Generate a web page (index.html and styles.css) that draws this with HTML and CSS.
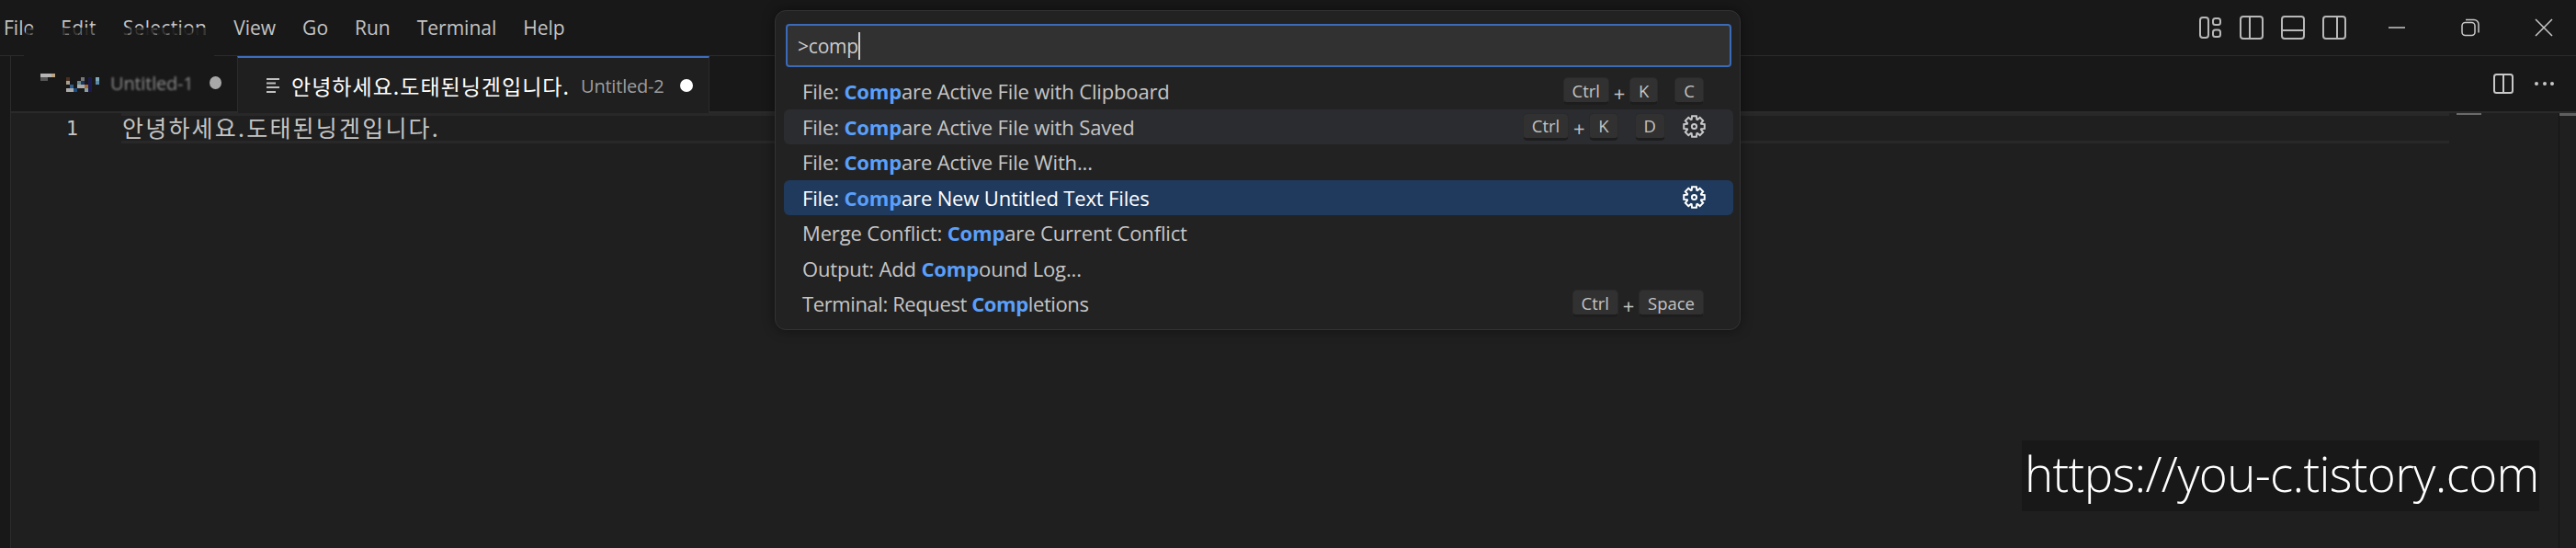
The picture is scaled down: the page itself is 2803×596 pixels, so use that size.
FILE: index.html
```html
<!DOCTYPE html>
<html lang="ko">
<head>
<meta charset="utf-8">
<title>Visual Studio Code</title>
<link rel="stylesheet" href="styles.css">
</head>
<body>
<div class="app">
  <header class="titlebar">
    <nav class="menu">
      <span class="menu-item masked mask-file">File</span>
      <span class="menu-item masked wide">Edit</span>
      <span class="menu-item masked wide">Selection</span>
      <span class="menu-item">View</span>
      <span class="menu-item">Go</span>
      <span class="menu-item">Run</span>
      <span class="menu-item">Terminal</span>
      <span class="menu-item">Help</span>
    </nav>
    <div class="title-actions">
      <svg class="ico" viewBox="0 0 26 26"><rect x="2" y="2" width="9" height="22" rx="3"/><rect x="16" y="3" width="8" height="7" rx="2.500"/><rect x="16" y="15.500" width="8" height="7.500" rx="2.500"/></svg>
      <svg class="ico" viewBox="0 0 26 26"><rect x="1" y="1" width="24" height="24" rx="3"/><path d="M11 1v24"/></svg>
      <svg class="ico" viewBox="0 0 26 26"><rect x="1" y="1" width="24" height="24" rx="3"/><path d="M1 16h24"/></svg>
      <svg class="ico" viewBox="0 0 26 26"><rect x="1" y="1" width="24" height="24" rx="3"/><path d="M16 1v24"/></svg>
    </div>
    <div class="window-controls">
      <svg class="win" viewBox="0 0 20 20"><path d="M1 10h18"/></svg>
      <svg class="win" viewBox="0 0 20 20"><rect x="1" y="4.500" width="14" height="14" rx="3.500"/><path d="M5 1.500h9a5 5 0 0 1 5 5v9"/></svg>
      <svg class="win" viewBox="0 0 20 20"><path d="M1 1l18 18M19 1L1 19"/></svg>
    </div>
    <div class="title-mask"></div>
  </header>
  <div class="workbench">
    <div class="activity"></div>
    <main class="editor-group">
      <div class="tabs">
        <div class="tab tab-inactive">
          <svg class="mosaic" viewBox="44 80 64 20" shape-rendering="crispEdges">
            <rect x="44" y="80" width="12" height="4" fill="#b5b5b5"/><rect x="56" y="80" width="4" height="4" fill="#bfa57f"/><rect x="44" y="84" width="8" height="4" fill="#555"/>
            <rect x="72" y="84" width="4" height="4" fill="#4a3020"/><rect x="88" y="84" width="4" height="4" fill="#777"/><rect x="96" y="84" width="4" height="16" fill="#1a1a50"/><rect x="104" y="84" width="4" height="4" fill="#7fa8b8"/>
            <rect x="72" y="88" width="4" height="4" fill="#a8a090"/><rect x="84" y="88" width="4" height="4" fill="#6a8a90"/><rect x="88" y="88" width="4" height="4" fill="#1f3560"/><rect x="104" y="88" width="4" height="4" fill="#5a8aa8"/>
            <rect x="76" y="92" width="4" height="4" fill="#2f5f8f"/><rect x="84" y="92" width="8" height="4" fill="#aaa"/><rect x="92" y="92" width="4" height="4" fill="#a06a30"/>
            <rect x="72" y="96" width="8" height="4" fill="#aaa"/><rect x="80" y="96" width="4" height="4" fill="#1a4a80"/><rect x="92" y="96" width="4" height="4" fill="#8aa0a0"/>
          </svg>
          <span class="blur-text">Untitled-1</span>
          <span class="dot dot-dim"></span>
        </div>
        <div class="tab tab-active">
          <svg class="file-ico" viewBox="0 0 14 16"><path d="M0 1h14M0 5.500h10M0 10h14M0 15h10"/></svg>
          <span class="tab-name">안녕하세요.도태된닝겐입니다.</span>
          <span class="tab-desc">Untitled-2</span>
          <span class="dot"></span>
        </div>
        <div class="tab-actions">
          <svg class="split" viewBox="0 0 22 22"><rect x="1" y="1" width="20" height="20" rx="2.500"/><path d="M11 1v20"/></svg>
          <div class="more"><i></i><i></i><i></i></div>
        </div>
      </div>
      <div class="editor">
        <div class="gutter">1</div>
        <div class="code-line">안녕하세요.도태된닝겐입니다.</div>
        <div class="minimap"><div class="mini-text"></div></div>
        <div class="scroll"><div class="thumb"></div></div>
      </div>
    </main>
  </div>

  <section class="palette">
    <div class="input"><span class="input-text">&gt;comp</span><span class="caret"></span></div>
    <ul class="list">
      <li class="row">
        <span class="label">File: <b>Comp</b>are Active File with Clipboard</span>
        <span class="keys r-1"><kbd>Ctrl</kbd><em>+</em><kbd>K</kbd><span class="chord"></span><kbd>C</kbd></span>
      </li>
      <li class="row hover">
        <span class="label">File: <b>Comp</b>are Active File with Saved</span>
        <span class="keys"><kbd>Ctrl</kbd><em>+</em><kbd>K</kbd><span class="chord"></span><kbd>D</kbd></span>
        <svg class="gear" viewBox="-12.500 -12.500 25 25"><polygon points="-2.800,-7.700 -2.400,-11.250 2.400,-11.250 2.800,-7.700 3.460,-7.420 6.260,-9.650 9.650,-6.260 7.420,-3.460 7.700,-2.800 11.250,-2.400 11.250,2.400 7.700,2.800 7.420,3.460 9.650,6.260 6.260,9.650 3.460,7.420 2.800,7.700 2.400,11.250 -2.400,11.250 -2.800,7.700 -3.460,7.420 -6.260,9.650 -9.650,6.260 -7.420,3.460 -7.700,2.800 -11.250,2.400 -11.250,-2.400 -7.700,-2.800 -7.420,-3.460 -9.650,-6.260 -6.260,-9.650 -3.460,-7.420"/><circle r="2.600"/></svg>
      </li>
      <li class="row">
        <span class="label">File: <b>Comp</b>are Active File With...</span>
      </li>
      <li class="row selected">
        <span class="label">File: <b>Comp</b>are New Untitled Text Files</span>
        <svg class="gear" viewBox="-12.500 -12.500 25 25"><polygon points="-2.800,-7.700 -2.400,-11.250 2.400,-11.250 2.800,-7.700 3.460,-7.420 6.260,-9.650 9.650,-6.260 7.420,-3.460 7.700,-2.800 11.250,-2.400 11.250,2.400 7.700,2.800 7.420,3.460 9.650,6.260 6.260,9.650 3.460,7.420 2.800,7.700 2.400,11.250 -2.400,11.250 -2.800,7.700 -3.460,7.420 -6.260,9.650 -9.650,6.260 -7.420,3.460 -7.700,2.800 -11.250,2.400 -11.250,-2.400 -7.700,-2.800 -7.420,-3.460 -9.650,-6.260 -6.260,-9.650 -3.460,-7.420"/><circle r="2.600"/></svg>
      </li>
      <li class="row"><span class="label">Merge Conflict: <b>Comp</b>are Current Conflict</span></li>
      <li class="row"><span class="label">Output: Add <b>Comp</b>ound Log...</span></li>
      <li class="row">
        <span class="label tight">Terminal: Request <b>Comp</b>letions</span>
        <span class="keys r-1"><kbd>Ctrl</kbd><em>+</em><kbd>Space</kbd></span>
      </li>
    </ul>
  </section>

  <div class="watermark">https://you-c.tistory.com</div>
</div>
</body>
</html>
```
FILE: styles.css
```css
* { box-sizing: border-box; }
html, body { margin: 0; padding: 0; height: 100%; background: #1f1f1f; overflow: hidden; }
body { font-family: "Open Sans", "Noto Sans", "Noto Sans CJK KR", sans-serif; color: #ccc; }
.app { position: relative; width: 2803px; height: 596px; display: flex; flex-direction: column; }

.titlebar { position: relative; height: 61px; flex: none; background: #181818; border-bottom: 1px solid #2b2b2b; display: flex; align-items: center; }
.menu { display: flex; flex: 1; gap: 29px; padding-left: 4px; font-size: 21px; color: #c4c4c4; }
.menu-item { position: relative; }
.menu-item.wide { letter-spacing: .3px; }
.menu-item.masked::after { content: ""; position: absolute; left: 0; right: 0; top: 14px; height: 16px; background: repeating-linear-gradient(90deg, rgba(24,24,24,.78) 0 5px, rgba(24,24,24,.45) 5px 9px, rgba(24,24,24,.92) 9px 14px); box-shadow: inset 0 7px 0 rgba(24,24,24,.2), 0 6px 0 #181818; }
.menu-item.mask-file::after { left: 24px; right: -2px; }
.title-mask { position: absolute; left: 26px; width: 207px; bottom: -1px; height: 1px; background: #181818; }
.title-actions { display: flex; gap: 19px; }
.ico { width: 26px; height: 26px; fill: none; stroke: #b8b8b8; stroke-width: 2; }
.window-controls { display: flex; gap: 60px; margin-left: 45px; padding-right: 25px; }
.win { width: 20px; height: 20px; fill: none; stroke: #c8c8c8; stroke-width: 1.500; }

.workbench { flex: 1; display: flex; min-height: 0; }
.activity { width: 12px; flex: none; background: #181818; border-right: 1px solid #2b2b2b; }
.editor-group { flex: 1; display: flex; flex-direction: column; min-width: 0; }
.tabs { height: 62px; flex: none; display: flex; background: #181818; border-bottom: 2px solid #2a2a2a; }
.tab { display: flex; align-items: center; flex: none; }
.tab-inactive { width: 246px; padding: 0 0 2px 32px; }
.mosaic { width: 64px; height: 20px; flex: none; }
.blur-text { width: 88px; margin-left: 12px; font-size: 20px; color: #888; filter: blur(1.100px); white-space: nowrap; letter-spacing: -.2px; }
.dot { width: 14px; height: 14px; border-radius: 50%; background: #fff; flex: none; }
.dot-dim { width: 13px; background: #a8a8a8; margin-left: 20px; }
.tab-active { width: 514px; height: 62px; background: #1f1f1f; border-top: 2px solid #3d6cc0; border-right: 1px solid #2b2b2b; border-left: 1px solid #2b2b2b; padding: 0 0 0 31px; }
.file-ico { width: 14px; height: 16px; stroke: #c0c0c0; stroke-width: 2; fill: none; flex: none; margin-right: 13px; }
.tab-name { font-family: "Noto Sans CJK KR", sans-serif; font-size: 23px; color: #fff; white-space: nowrap; letter-spacing: 1px; width: 303px; flex: none; }
.tab-desc { font-size: 20px; color: #9d9d9d; margin-left: 12px; letter-spacing: -.2px; width: 90px; flex: none; white-space: nowrap; }
.tab-active .dot { margin-left: 18px; }
.tab-actions { margin-left: auto; display: flex; align-items: center; gap: 23px; padding-right: 24px; }
.split { width: 22px; height: 22px; fill: none; stroke: #c8c8c8; stroke-width: 2; }
.more { display: flex; gap: 4.500px; width: 21px; }
.more i { width: 4px; height: 4px; border-radius: 50%; background: #c8c8c8; flex: none; }

.editor { flex: 1; display: flex; background: #1f1f1f; }
.gutter { width: 120px; flex: none; height: 33px; line-height: 33px; padding-right: 47px; text-align: right; font-family: "DejaVu Sans Mono", monospace; font-size: 22px; color: #c4c4c4; }
.code-line { flex: 1; height: 33px; border-top: 3px solid #282828; border-bottom: 3px solid #282828; line-height: 25px; font-family: "Noto Sans CJK KR", monospace; font-size: 25px; color: #c4c4c4; letter-spacing: 2.200px; white-space: nowrap; padding-left: 1px; }
.minimap { width: 119px; flex: none; padding: 0 0 0 8px; }
.mini-text { width: 27px; height: 2px; background: #6a6a6a; }
.scroll { width: 19px; flex: none; border-left: 1px solid #141414; }
.thumb { height: 3px; background: #5f5f5f; }

.palette { position: absolute; left: 843px; top: 11px; width: 1051px; height: 348px; background: #222; border: 1px solid #333; border-radius: 12px; box-shadow: 0 0 14px rgba(0,0,0,.45); padding: 14px 0 0 9px; }
.input { height: 47px; background: #313131; border: 2px solid #3a6ab8; border-radius: 4px; padding-left: 11px; display: flex; align-items: center; font-size: 21px; color: #ccc; margin: 0 0 7px 2px; width: 1029px; }
.input-text { letter-spacing: -.2px; }
.caret { width: 2px; height: 30px; background: #ccc; }
.list { list-style: none; margin: 0; padding: 0; }
.row { width: 1033px; height: 38px; margin-bottom: .5px; border-radius: 6px; display: flex; align-items: center; padding: 0 30px 0 20px; font-size: 22px; color: #c6c6c6; white-space: nowrap; }
.label { flex: 1; letter-spacing: -.15px; }
.label.tight { letter-spacing: -.4px; }
.label b { color: #5a9ffa; font-weight: 700; }
.hover { background: #2b2c2f; }
.selected { background: #1f3a5c; color: #fff; }
.selected .gear { stroke: #fff; }
.keys { display: flex; align-items: center; font-size: 18.500px; color: #c4c4c4; }
.keys.r-1 { margin-right: 2px; }
.keys em { font-style: normal; font-size: 22px; width: 22px; text-align: center; padding-top: 3px; }
.chord { width: 18px; }
kbd { font: inherit; height: 30px; min-width: 31px; padding: 0 9px; background: #313131; border: 1px solid #2a2a2a; border-bottom: 3px solid #1d1d1d; border-radius: 5px; display: flex; align-items: center; justify-content: center; }
.gear { width: 25px; height: 25px; margin-left: 19px; fill: none; stroke: #c8c8c8; stroke-width: 2; }

.watermark { position: absolute; left: 2200px; top: 479px; width: 563px; height: 77px; padding-left: 3px; background: #181818; color: #fff; font-family: "Open Sans", sans-serif; font-size: 53px; font-weight: 300; line-height: 71px; letter-spacing: -.7px; white-space: nowrap; }
```
